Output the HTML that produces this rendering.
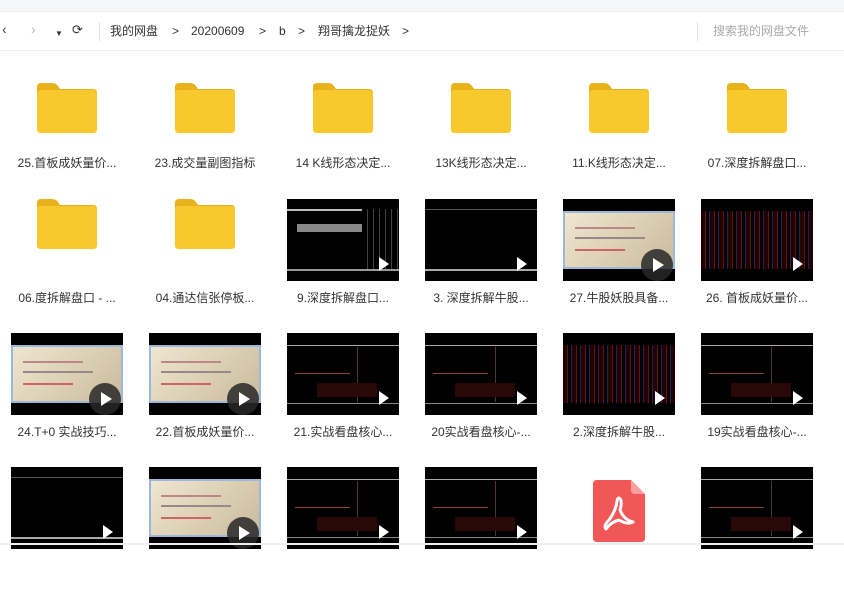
<!DOCTYPE html>
<html><head><meta charset="utf-8"><style>
*{margin:0;padding:0;box-sizing:border-box}
body{width:844px;height:545px;overflow:hidden;background:#fff;font-family:"Liberation Sans","Noto Sans CJK SC",sans-serif;position:relative;color:#333}
.top{position:absolute;left:0;top:0;width:844px;height:12px;background:#f5f6f7;border-bottom:1px solid #eceef0}
.bar{position:absolute;left:0;top:12px;width:844px;height:39px;border-bottom:1px solid #eceef0;font-size:12px}
.bar span{position:absolute;top:12px;line-height:14px}
.it{position:absolute;width:138px;height:134px}
.lbl{position:absolute;left:0;width:134px;text-align:center;font-size:12px;color:#333;white-space:nowrap}
.fold{position:absolute;left:37px;width:60px;height:50px}
.th{position:absolute;left:11px;width:112px;height:82px;background:#000;overflow:hidden}
.play{position:absolute;right:10px;bottom:10px;width:0;height:0;border-left:10px solid #fff;border-top:7px solid transparent;border-bottom:7px solid transparent}
.pc{position:absolute;right:2px;bottom:0;width:32px;height:32px;border-radius:50%;background:rgba(40,40,40,.85)}
.pc:after{content:"";position:absolute;left:12px;top:9px;border-left:11px solid #fff;border-top:7px solid transparent;border-bottom:7px solid transparent}
.parch{position:absolute;left:0;top:12px;width:112px;height:58px;background:linear-gradient(135deg,#efe6d2,#d9ccb0 60%,#c9bb9c);border:2px solid #9eb6d8}
</style></head><body>
<div class="top"></div>
<div class="bar">
<span style="left:2px;font-size:14px;top:10px;color:#444">&#x2039;</span>
<span style="left:31px;font-size:14px;top:10px;color:#bbb">&#x203A;</span>
<span style="left:55px;font-size:8px;top:15px">▼</span>
<span style="left:72px;font-size:13px;top:11px">⟳</span>
<div style="position:absolute;left:99px;top:10px;width:1px;height:19px;background:#e2e2e2"></div>
<span style="left:110px">我的网盘</span>
<span style="left:172px">&gt;</span>
<span style="left:191px">20200609</span>
<span style="left:259px">&gt;</span>
<span style="left:279px">b</span>
<span style="left:298px">&gt;</span>
<span style="left:318px">翔哥擒龙捉妖</span>
<span style="left:402px">&gt;</span>
<div style="position:absolute;left:697px;top:10px;width:1px;height:19px;background:#e2e2e2"></div>
<span style="left:713px;color:#aaa">搜索我的网盘文件</span>
</div>
<div id="g"></div>
<script>
function folder(){return '<div class="fold" style="top:0"><svg width="60" height="50" viewBox="0 0 60 50"><path d="M0 4Q0 0 4 0H15Q19 0 21 3L23 6H56Q60 6 60 10V46Q60 50 56 50H4Q0 50 0 46Z" fill="#e8b21a"/><path d="M0 10Q0 7 4 7H56Q60 7 60 11V46Q60 50 56 50H4Q0 50 0 46Z" fill="#f8c92d"/></svg></div>';}
function thumb(t){
 let h='<div class="th" style="top:0">';
 if(t=='p'){h+='<div class="parch"><div style="position:absolute;left:10px;top:14px;width:60px;height:2px;background:#b88"></div><div style="position:absolute;left:10px;top:24px;width:70px;height:2px;background:#988"></div><div style="position:absolute;left:10px;top:36px;width:50px;height:2px;background:#c66"></div></div><div class="pc"></div>';}
 else if(t=='c'){h+='<div style="position:absolute;left:0;top:12px;width:112px;height:1px;background:#aaa"></div><div style="position:absolute;left:0;top:70px;width:112px;height:1px;background:#888"></div><div style="position:absolute;left:70px;top:14px;width:1px;height:55px;background:#533"></div><div style="position:absolute;left:8px;top:40px;width:55px;height:20px;border-top:1px solid #844"></div><div style="position:absolute;left:30px;top:50px;width:60px;height:14px;background:#2a0808"></div><div class="play"></div>';}
 else if(t=='r'){h+='<div style="position:absolute;left:0;top:12px;width:112px;height:58px;background:repeating-linear-gradient(90deg,#200 0 4px,#611 4px 5px,#000 5px 8px,#225 8px 9px)"></div><div class="play"></div>';}
 else if(t=='g'){h+='<div style="position:absolute;left:0;top:10px;width:112px;height:2px;background:#bbb"></div><div style="position:absolute;left:10px;top:25px;width:65px;height:8px;background:#888"></div><div style="position:absolute;left:75px;top:10px;width:37px;height:60px;background:repeating-linear-gradient(90deg,#000 0 5px,#443 5px 6px)"></div><div style="position:absolute;left:0;top:70px;width:112px;height:2px;background:#999"></div><div class="play"></div>';}
 else {h+='<div style="position:absolute;left:0;top:10px;width:112px;height:1px;background:#555"></div><div style="position:absolute;left:0;top:70px;width:112px;height:2px;background:#aaa"></div><div class="play"></div>';}
 return h+'</div>';
}
const items=[
['f','25.首板成妖量价...'],['f','23.成交量副图指标'],['f','14 K线形态决定...'],['f','13K线形态决定...'],['f','11.K线形态决定...'],['f','07.深度拆解盘口...'],
['f','06.度拆解盘口 - ...'],['f','04.通达信张停板...'],['g','9.深度拆解盘口...'],['d','3. 深度拆解牛股...'],['p','27.牛股妖股具备...'],['r','26. 首板成妖量价...'],
['p','24.T+0 实战技巧...'],['p','22.首板成妖量价...'],['c','21.实战看盘核心...'],['c','20实战看盘核心-...'],['r','2.深度拆解牛股...'],['c','19实战看盘核心-...'],
['d',''],['p',''],['c',''],['c',''],['pdf',''],['c','']];
let out='';
items.forEach((it,i)=>{
 const r=Math.floor(i/6),c=i%6;const x=c*138;
 let y,ly;
 if(r==0){y=83;ly=154}else{y=199+(r-1)*134;ly=y+90}
 let h='<div class="it" style="left:'+x+'px;top:'+y+'px">';
 if(it[0]=='f'){h+=folder();}
 else if(it[0]=='pdf'){h+='<div style="position:absolute;left:41px;top:13px"><svg width="52" height="62" viewBox="0 0 52 62"><path d="M4 0H38L52 14V58Q52 62 48 62H4Q0 62 0 58V4Q0 0 4 0Z" fill="#f25757"/><path d="M38 0V10Q38 14 42 14H52Z" fill="#f8a0a0"/><path d="M26 18Q30 20 27 30Q31 40 40 42Q34 45 26 40Q18 42 13 49Q10 46 16 40Q22 32 24 22Q24 18 26 18Z" fill="none" stroke="#fff" stroke-width="3" stroke-linejoin="round"/></svg></div>';}
 else h+=thumb(it[0]);
 h+='</div>';
 if(it[1]) h+='<div class="lbl" style="left:'+x+'px;top:'+ly+'px">'+it[1]+'</div>';
 out+=h;
});
document.getElementById('g').innerHTML=out;
</script>
<div style="position:absolute;left:0;top:543px;width:844px;height:2px;background:#eee"></div>
</body></html>
